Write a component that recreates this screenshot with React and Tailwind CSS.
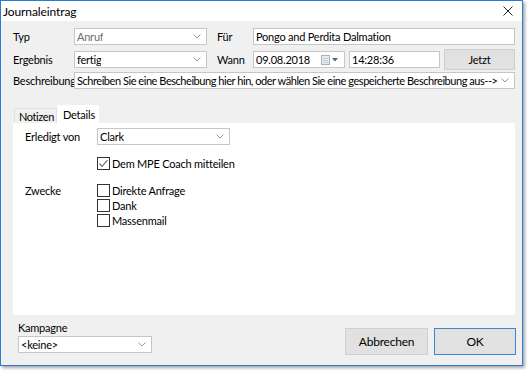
import React from "react";

function Chevron() {
  return (
    <svg width="8" height="5" viewBox="0 0 8 5" className="shrink-0">
      <polyline points="0.5,0.5 4,4 7.5,0.5" fill="none" stroke="#9a9a9a" strokeWidth="1" />
    </svg>
  );
}

function Combo({ w, text, disabled, tight }) {
  return (
    <div className={`${w} h-[17px] bg-white border border-[#c6c6c6] flex items-center justify-between pl-[2px] pr-[5px] shrink-0`}>
      <span className={`whitespace-nowrap overflow-hidden ${tight ? "tracking-[-0.45px]" : ""} ${disabled ? "text-[#6d6d6d]" : "text-black"}`}>{text}</span>
      <Chevron />
    </div>
  );
}

function Check({ checked, label }) {
  return (
    <div className="flex items-center h-[15px]">
      <div className="w-[13px] h-[13px] border border-[#333333] bg-white flex items-center justify-center shrink-0">
        {checked && (
          <svg width="11" height="11" viewBox="0 0 11 11">
            <polyline points="1.5,5.5 4,8.5 9.5,2" fill="none" stroke="#555555" strokeWidth="1.1" />
          </svg>
        )}
      </div>
      <span className="ml-[2px] whitespace-nowrap">{label}</span>
    </div>
  );
}

export default function App() {
  return (
    <div className="w-[530px] h-[372px] bg-white font-['Lato',sans-serif] text-[11px] leading-[13px] tracking-[-0.22px] text-black">
      <div className="w-[523px] h-[366px] border border-[#2a7bd2] bg-[#f0f0f0] flex flex-col shadow-[2px_2px_3px_rgba(0,0,0,0.35)]">
        {/* title bar */}
        <div className="h-[20px] bg-white flex items-center justify-between pl-[2px] pr-[9px] shrink-0">
          <span className="text-[12px] tracking-[-0.1px]">Journaleintrag</span>
          <svg width="10" height="10" viewBox="0 0 10 10">
            <path d="M0.5 0.5 L9.5 9.5 M9.5 0.5 L0.5 9.5" stroke="#222" strokeWidth="1" />
          </svg>
        </div>

        {/* body */}
        <div className="flex flex-col pl-[12px] pt-[5px]">
          {/* row 1 */}
          <div className="flex items-center h-[21px] mb-[2px]">
            <div className="w-[61px] shrink-0">Typ</div>
            <Combo w="w-[133px]" text="Anruf" disabled />
            <div className="w-[46px] pl-[10px] shrink-0">Für</div>
            <div className="w-[262px] h-[17px] bg-white border border-[#c6c6c6] flex items-center pl-[2px]">
              Pongo and Perdita Dalmation
            </div>
          </div>
          {/* row 2 */}
          <div className="flex items-center h-[21px]">
            <div className="w-[61px] shrink-0">Ergebnis</div>
            <Combo w="w-[133px]" text="fertig" />
            <div className="w-[46px] pl-[10px] shrink-0">Wann</div>
            <div className="w-[92px] h-[17px] bg-white border border-[#c6c6c6] flex items-center justify-between pl-[2px] pr-[6px]">
              <span>09.08.2018</span>
              <div className="flex items-center gap-[2px]">
                <svg width="9" height="10" viewBox="0 0 9 10">
                  <rect x="0.5" y="0.5" width="8" height="9" fill="#e8ecf0" stroke="#a8b0b8" />
                  <path d="M2 3.5 H7 M2 5.5 H7 M2 7.5 H7" stroke="#c4ccd4" strokeWidth="1" />
                </svg>
                <svg width="6" height="4" viewBox="0 0 6 4">
                  <polygon points="0,0 6,0 3,3.5" fill="#4a6788" />
                </svg>
              </div>
            </div>
            <div className="w-[91px] h-[17px] ml-[4px] bg-white border border-[#c6c6c6] flex items-center pl-[2px]">
              14:28:36
            </div>
            <div className="w-[71px] h-[21px] ml-[4px] bg-[#e1e1e1] border border-[#cfcfcf] flex items-center justify-center">
              Jetzt
            </div>
          </div>
          {/* row 3 */}
          <div className="flex items-center h-[21px]">
            <div className="w-[61px] whitespace-nowrap shrink-0">Beschreibung</div>
            <Combo w="w-[441px]" tight text="Schreiben Sie eine Bescheibung hier hin, oder wählen Sie eine gespeicherte Beschreibung aus-->" />
          </div>

          {/* tabs */}
          <div className="mt-[14px] flex items-end h-[18px] pl-[1px]">
            <div className="w-[43px] h-[15px] border border-b-0 border-[#e2e2e2] flex items-center pl-[4px] whitespace-nowrap tracking-[-0.4px]">Notizen</div>
            <div className="w-[42px] h-[18px] bg-white flex items-center pl-[6px]">Details</div>
          </div>
          <div className="w-[502px] h-[192px] bg-white flex flex-col pt-[5px] pl-[12px]">
            <div className="flex items-center h-[17px]">
              <div className="w-[72px] whitespace-nowrap">Erledigt von</div>
              <Combo w="w-[133px]" text="Clark" />
            </div>
            <div className="mt-[11px] ml-[72px]">
              <Check checked label="Dem MPE Coach mitteilen" />
            </div>
            <div className="mt-[12px] flex">
              <div className="w-[72px] pt-[1px]">Zwecke</div>
              <div className="flex flex-col">
                <Check label="Direkte Anfrage" />
                <Check label="Dank" />
                <Check label="Massenmail" />
              </div>
            </div>
          </div>

          {/* bottom */}
          <div className="flex">
            <div className="flex flex-col pl-[5px] pt-[6px]">
              <div className="h-[14px]">Kampagne</div>
              <div className="mt-[1px]">
                <Combo w="w-[134px]" text="<keine>" />
              </div>
            </div>
            <div className="flex ml-[193px] mt-[13px]">
              <div className="w-[83px] h-[27px] bg-[#e1e1e1] border border-[#d0d0d0] flex items-center justify-center text-[12px]">
                Abbrechen
              </div>
              <div className="w-[82px] h-[27px] ml-[6px] bg-[#e1e1e1] border border-[#3b86cc] flex items-center justify-center text-[12px]">
                OK
              </div>
            </div>
          </div>
        </div>
      </div>
    </div>
  );
}
